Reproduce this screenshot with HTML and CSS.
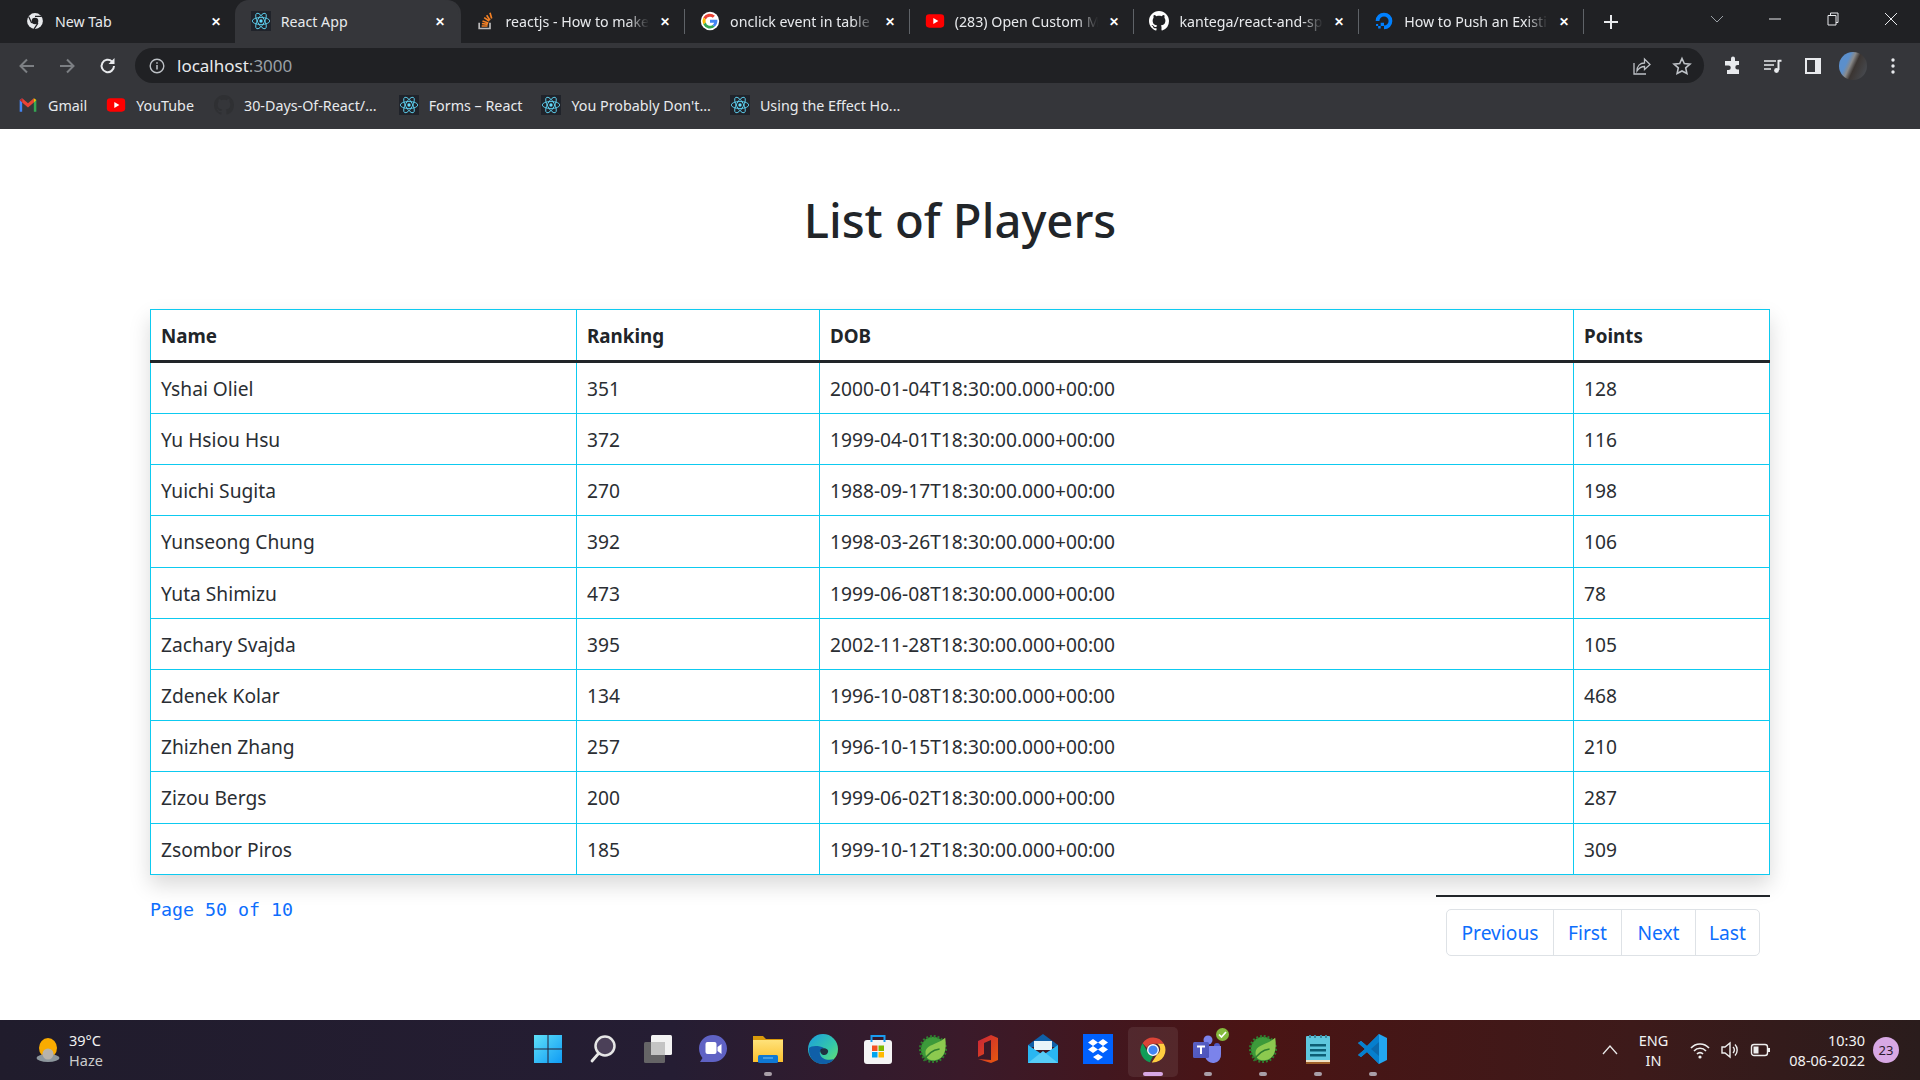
FILE: index.html
```html
<!DOCTYPE html>
<html lang="en">
<head>
<meta charset="utf-8">
<title>React App</title>
<link rel="stylesheet" href="styles.css">
</head>
<body>
<svg class="defs" width="0" height="0" aria-hidden="true">
  <defs>
    <linearGradient id="win" x1="0" y1="0" x2="1" y2="1"><stop offset="0" stop-color="#5fe0f8"/><stop offset="1" stop-color="#0f9bf5"/></linearGradient>
    <linearGradient id="folder" x1="0" y1="0" x2="0" y2="1"><stop offset="0" stop-color="#ffe27a"/><stop offset="1" stop-color="#fbc02d"/></linearGradient>
    <linearGradient id="edge" x1="0" y1="0" x2="1" y2="1"><stop offset="0" stop-color="#1a9be0"/><stop offset=".6" stop-color="#35c9a8"/><stop offset="1" stop-color="#6fe06a"/></linearGradient>
    <linearGradient id="office" x1="0" y1="0" x2="1" y2="1"><stop offset="0" stop-color="#c8233a"/><stop offset="1" stop-color="#e8590c"/></linearGradient>
    <linearGradient id="teamsg" x1="0" y1="0" x2="1" y2="1"><stop offset="0" stop-color="#5a62c4"/><stop offset="1" stop-color="#4b53bc"/></linearGradient>
    <symbol id="react" viewBox="0 0 24 24">
      <rect width="24" height="24" fill="#20232a"/>
      <circle cx="12" cy="12" r="2" fill="#61dafb"/>
      <g fill="none" stroke="#61dafb" stroke-width="1">
        <ellipse cx="12" cy="12" rx="10.5" ry="4.2"/>
        <ellipse cx="12" cy="12" rx="10.5" ry="4.2" transform="rotate(60 12 12)"/>
        <ellipse cx="12" cy="12" rx="10.5" ry="4.2" transform="rotate(120 12 12)"/>
      </g>
    </symbol>
    <symbol id="yt" viewBox="0 0 24 24">
      <rect x="1" y="4" width="22" height="16" rx="4" fill="#f00"/>
      <path d="M10 8.5v7l6-3.5z" fill="#fff"/>
    </symbol>
    <symbol id="gh" viewBox="0 0 16 16">
      <path fill="currentColor" d="M8 0C3.58 0 0 3.58 0 8c0 3.54 2.29 6.53 5.47 7.59.4.07.55-.17.55-.38 0-.19-.01-.82-.01-1.49-2.01.37-2.53-.49-2.69-.94-.09-.23-.48-.94-.82-1.13-.28-.15-.68-.52-.01-.53.63-.01 1.08.58 1.23.82.72 1.21 1.87.87 2.33.66.07-.52.28-.87.51-1.07-1.78-.2-3.64-.89-3.64-3.95 0-.87.31-1.59.82-2.15-.08-.2-.36-1.02.08-2.12 0 0 .67-.21 2.2.82.64-.18 1.32-.27 2-.27s1.36.09 2 .27c1.53-1.04 2.2-.82 2.2-.82.44 1.1.16 1.92.08 2.12.51.56.82 1.27.82 2.15 0 3.07-1.87 3.75-3.65 3.95.29.25.54.73.54 1.48 0 1.07-.01 1.93-.01 2.2 0 .21.15.46.55.38A8.01 8.01 0 0 0 16 8c0-4.42-3.58-8-8-8z"/>
    </symbol>
    <symbol id="chrome" viewBox="0 0 48 48">
      <path fill="#db4437" d="M24 4a20 20 0 0 1 17.3 10H24a10 10 0 0 0-9.5 6.8L7.3 13A20 20 0 0 1 24 4z"/>
      <path fill="#0f9d58" d="M24 44A20 20 0 0 1 7.300 13l8.700 15a10 10 0 0 0 8 6l-5 9.500A20 20 0 0 1 24 44z"/>
      <path fill="#ffcd40" d="M41.300 14A20 20 0 0 1 24 44h-2l8.500-13A10 10 0 0 0 31 14z"/>
      <circle cx="24" cy="24" r="8.500" fill="#4285f4" stroke="#fff" stroke-width="2.200"/>
    </symbol>
    <symbol id="leaf" viewBox="0 0 32 32">
      <circle cx="16" cy="16" r="13" fill="#3c9a3a"/>
      <circle cx="16" cy="16" r="13.500" fill="none" stroke="#2f7d2f" stroke-width="3" stroke-dasharray="2 2"/>
      <path fill="#8cc94f" d="M29 4c2 13-1 24-13 24-5 0-8-3-8-8C8 11 20 12 29 4z"/>
      <path fill="none" stroke="#2f7d2f" stroke-width="1.500" d="M6 29c4-8 10-12 17-13"/>
    </symbol>
  </defs>
</svg>

<header class="browser">
  <div class="tabstrip">
    <div class="tab tab-first">
      <svg class="fav" viewBox="0 0 24 24"><circle cx="12" cy="12" r="9.500" fill="#e8eaed"/><circle cx="12" cy="12" r="4" fill="#202124"/><path d="M12 6.500h8M8 14.500 4.500 7M15.500 14.500 11 21.500" stroke="#202124" stroke-width="1.500" fill="none"/></svg>
      <span class="tab-title">New Tab</span><span class="tab-x">✕</span>
    </div>
    <div class="tab tab-active">
      <svg class="fav"><use href="#react"/></svg>
      <span class="tab-title">React App</span><span class="tab-x">✕</span>
    </div>
    <div class="tab">
      <svg class="fav" viewBox="0 0 24 24"><path d="M5 14v7h13v-7" fill="none" stroke="#bcbbbb" stroke-width="2"/><path d="M8 18h7M8.300 15l7 1M9 12l7 2.500M11 8l6 4M14 5l4 6M18 2l2 7" stroke="#f48024" stroke-width="2" fill="none"/></svg>
      <span class="tab-title fade">reactjs - How to make</span><span class="tab-x">✕</span>
    </div>
    <div class="tab tab-sep">
      <svg class="fav" viewBox="0 0 24 24"><circle cx="12" cy="12" r="11" fill="#fff"/><path d="M12 7a5 5 0 0 1 3.300 1.200l2.600-2.600A9 9 0 0 0 4 7.800l3 2.400A5 5 0 0 1 12 7z" fill="#ea4335"/><path d="M7 10.200 4 7.800a9 9 0 0 0 0 8.400l3-2.400a5 5 0 0 1 0-3.600z" fill="#fbbc05"/><path d="M7 13.800l-3 2.400a9 9 0 0 0 13.700 2.800l-2.800-2.200A5 5 0 0 1 7 13.800z" fill="#34a853"/><path d="M20.800 10.500H12v3.500h5a4.200 4.200 0 0 1-2.100 2.800l2.800 2.200c2.300-2.100 3.500-5.200 3.100-8.500z" fill="#4285f4"/></svg>
      <span class="tab-title fade">onclick event in table</span><span class="tab-x">✕</span>
    </div>
    <div class="tab tab-sep">
      <svg class="fav"><use href="#yt"/></svg>
      <span class="tab-title fade">(283) Open Custom M</span><span class="tab-x">✕</span>
    </div>
    <div class="tab tab-sep">
      <svg class="fav fav-gh"><use href="#gh"/></svg>
      <span class="tab-title fade">kantega/react-and-sp</span><span class="tab-x">✕</span>
    </div>
    <div class="tab tab-sep">
      <svg class="fav" viewBox="0 0 24 24"><path d="M12 22v-4.500a5.500 5.500 0 1 0-5.500-5.500H2A10 10 0 1 1 12 22z" fill="#0080ff"/><path d="M8 18h4v-4H8zM5 21h3v-3H5zM2.500 18H5v-2.500H2.500z" fill="#0080ff"/></svg>
      <span class="tab-title fade">How to Push an Existi</span><span class="tab-x">✕</span>
    </div>
    <div class="tab-new">
      <svg width="16" height="16" viewBox="0 0 16 16"><path d="M8 1v14M1 8h14" stroke="#e8eaed" stroke-width="2"/></svg>
    </div>
    <div class="win-controls">
      <svg width="14" height="14" viewBox="0 0 14 14"><path d="M1 4l6 6 6-6" fill="none" stroke="#9aa0a6"/></svg>
      <svg class="wc-min" width="14" height="14" viewBox="0 0 14 14"><path d="M1 7h12" stroke="#e8eaed"/></svg>
      <svg class="wc-max" width="14" height="14" viewBox="0 0 14 14"><path d="M2 3.500h8v9.500H2zM4.500 3.500V1H12v9.500h-2" fill="none" stroke="#e8eaed"/></svg>
      <svg class="wc-close" width="14" height="14" viewBox="0 0 14 14"><path d="M1 1l12 12M13 1 1 13" stroke="#e8eaed"/></svg>
    </div>
  </div>

  <div class="toolbar">
    <svg class="tb-icon tb-back" viewBox="0 0 20 20"><path d="M17 10H4M10 3.500 3.500 10l6.500 6.500" fill="none" stroke="#7c7f83" stroke-width="2"/></svg>
    <svg class="tb-icon tb-fwd" viewBox="0 0 20 20"><path d="M3 10h13M10 3.500l6.500 6.500-6.500 6.500" fill="none" stroke="#7c7f83" stroke-width="2"/></svg>
    <svg class="tb-icon tb-reload" viewBox="0 0 20 20"><path d="M16 10a6.200 6.200 0 1 1-2-4.600" fill="none" stroke="#e8eaed" stroke-width="2"/><path d="M16.500 2v6h-6z" fill="#e8eaed"/></svg>
    <div class="omnibox">
      <svg class="omni-info" width="16" height="16" viewBox="0 0 16 16"><circle cx="8" cy="8" r="6.800" fill="none" stroke="#bdc1c6" stroke-width="1.400"/><path d="M8 7v4.500M8 4.200v1.500" stroke="#bdc1c6" stroke-width="1.500"/></svg>
      <span class="url">localhost<span class="url-port">:3000</span></span>
      <svg class="omni-share" width="20" height="20" viewBox="0 0 20 20"><path d="M3 7v11h12" fill="none" stroke="#bdc1c6" stroke-width="1.300"/><path d="M6 15c0-5 3-8 7.500-8V3l5.500 5.500-5.500 5V10.500C10 10.500 8 12 6 15z" fill="none" stroke="#bdc1c6" stroke-width="1.300"/></svg>
      <svg class="omni-star" width="20" height="20" viewBox="0 0 20 20"><path d="M10 2.500l2.300 5 5.700.6-4.300 3.800 1.200 5.600L10 15l-4.900 2.500 1.200-5.600L2 8.100l5.700-.6z" fill="none" stroke="#bdc1c6" stroke-width="1.600"/></svg>
    </div>
    <svg class="tb-icon tb-ext" viewBox="0 0 20 20"><path fill="#e8eaed" d="M8 2.500a2 2 0 0 1 4 0V5h4v4h-1.500a2.200 2.200 0 0 0 0 4.400H16V18H4v-4h1.500a2.200 2.200 0 0 0 0-4.500H2V5h6z"/></svg>
    <svg class="tb-icon tb-media" viewBox="0 0 20 20"><path d="M1 5h12M1 9h10M1 13h7" stroke="#e8eaed" stroke-width="1.600"/><path d="M15.500 4v10M15.500 4.800h3" stroke="#e8eaed" stroke-width="2"/><circle cx="13.500" cy="14.500" r="2.400" fill="#e8eaed"/></svg>
    <svg class="tb-icon tb-side" viewBox="0 0 20 20"><path d="M2 2h16v16H2z" fill="#e8eaed"/><rect x="4" y="4" width="8" height="12" fill="#35363a"/></svg>
    <div class="avatar"></div>
    <svg class="tb-icon tb-menu" viewBox="0 0 20 20"><circle cx="10" cy="4" r="1.700" fill="#e8eaed"/><circle cx="10" cy="10" r="1.700" fill="#e8eaed"/><circle cx="10" cy="16" r="1.700" fill="#e8eaed"/></svg>
  </div>

  <nav class="bookmarks">
    <a class="bm bm-gmail"><svg class="bm-ico" viewBox="0 0 24 24"><path d="M2 20V6l3-2v16z" fill="#4285f4"/><path d="M22 20V6l-3-2v16z" fill="#34a853"/><path d="M5 4l7 6 7-6v5l-7 6-7-6z" fill="#ea4335"/><path d="M2 6l3-2v5z" fill="#c5221f"/><path d="M22 6l-3-2v5z" fill="#fbbc04"/></svg>Gmail</a>
    <a class="bm bm-yt"><svg class="bm-ico"><use href="#yt"/></svg>YouTube</a>
    <a class="bm bm-gh"><svg class="bm-ico bm-ghico"><use href="#gh"/></svg>30-Days-Of-React/...</a>
    <a class="bm bm-r1"><svg class="bm-ico"><use href="#react"/></svg>Forms – React</a>
    <a class="bm bm-r2"><svg class="bm-ico"><use href="#react"/></svg>You Probably Don't...</a>
    <a class="bm bm-r3"><svg class="bm-ico"><use href="#react"/></svg>Using the Effect Ho...</a>
  </nav>
</header>

<main class="page">
  <h1 class="title">List of Players</h1>
  <table class="players">
    <colgroup><col class="c-name"><col class="c-rank"><col class="c-dob"><col class="c-pts"></colgroup>
    <thead><tr><th>Name</th><th>Ranking</th><th>DOB</th><th>Points</th></tr></thead>
    <tbody>
      <tr><td>Yshai Oliel</td><td>351</td><td>2000-01-04T18:30:00.000+00:00</td><td>128</td></tr>
      <tr><td>Yu Hsiou Hsu</td><td>372</td><td>1999-04-01T18:30:00.000+00:00</td><td>116</td></tr>
      <tr><td>Yuichi Sugita</td><td>270</td><td>1988-09-17T18:30:00.000+00:00</td><td>198</td></tr>
      <tr><td>Yunseong Chung</td><td>392</td><td>1998-03-26T18:30:00.000+00:00</td><td>106</td></tr>
      <tr><td>Yuta Shimizu</td><td>473</td><td>1999-06-08T18:30:00.000+00:00</td><td>78</td></tr>
      <tr><td>Zachary Svajda</td><td>395</td><td>2002-11-28T18:30:00.000+00:00</td><td>105</td></tr>
      <tr><td>Zdenek Kolar</td><td>134</td><td>1996-10-08T18:30:00.000+00:00</td><td>468</td></tr>
      <tr><td>Zhizhen Zhang</td><td>257</td><td>1996-10-15T18:30:00.000+00:00</td><td>210</td></tr>
      <tr><td>Zizou Bergs</td><td>200</td><td>1999-06-02T18:30:00.000+00:00</td><td>287</td></tr>
      <tr><td>Zsombor Piros</td><td>185</td><td>1999-10-12T18:30:00.000+00:00</td><td>309</td></tr>
    </tbody>
  </table>
  <div class="under">
    <code class="pageinfo">Page 50 of 10</code>
    <div class="pager-wrap">
      <hr class="rule">
      <ul class="pager">
        <li class="p-prev">Previous</li><li class="p-first">First</li><li class="p-next">Next</li><li class="p-last">Last</li>
      </ul>
    </div>
  </div>
</main>

<footer class="taskbar">
  <div class="tb-left">
    <svg class="weather" viewBox="0 0 24 24"><ellipse cx="12" cy="10" rx="9" ry="10" fill="#f9ab00"/><ellipse cx="12" cy="20" rx="11.500" ry="4" fill="#8d979d"/><circle cx="12" cy="16" r="5.500" fill="#b8b3ab"/></svg>
    <div class="weather-text"><span>39°C</span><span class="dim">Haze</span></div>
  </div>
  <div class="tb-apps">
    <div class="app"><svg class="ico" viewBox="0 0 30 30"><path fill="url(#win)" d="M1 1h13.500v13.500H1zM15.500 1H29v13.500H15.500zM1 15.500h13.500V29H1zM15.500 15.500H29V29H15.500z"/></svg></div>
    <div class="app"><svg class="ico" viewBox="0 0 30 30"><circle cx="17" cy="12" r="9.500" fill="#4b4058" stroke="#e6e6e6" stroke-width="2.500"/><path d="M10.500 19.500 4 27" stroke="#e6e6e6" stroke-width="2.800" stroke-linecap="round"/></svg></div>
    <div class="app"><svg class="ico" viewBox="0 0 30 30"><rect x="8" y="1" width="21" height="20" rx="1.500" fill="#f2f2f2"/><rect x="1" y="8" width="21" height="21" rx="1.500" fill="#6a6a6a" opacity=".92"/><rect x="8" y="8" width="14" height="13" fill="#c4c4c4"/></svg></div>
    <div class="app"><svg class="ico" viewBox="0 0 30 30"><path fill="#5f62c4" d="M15 1c8 0 14 6 14 13.500S23 28 15 28H2l2.500-4C2.500 21.500 1 18.500 1 14.500 1 7 7 1 15 1z"/><rect x="7.500" y="8" width="11" height="12" rx="2" fill="#fff"/><path d="M19.500 13l4-3v10l-4-3z" fill="#fff"/></svg></div>
    <div class="app app-on"><svg class="ico" viewBox="0 0 30 30"><path fill="#d99a0b" d="M0 2h10l3 3h17v6H0z"/><path fill="url(#folder)" d="M0 6h30v22H0z"/><rect x="5" y="21" width="20" height="8" rx="1.500" fill="#0f78d4"/><path d="M10 24h10" stroke="#7cc4f5"/></svg></div>
    <div class="app"><svg class="ico" viewBox="0 0 30 30"><circle cx="15" cy="15" r="15" fill="url(#edge)"/><path fill="#0f5fa8" d="M1 14C0 24 7 30 15 30c5 0 9-2 11-5-6 2-13 0-14-5-1-3 2-5 4-6-6-3-13-2-15 0z"/><path fill="#1d2035" d="M13 15c3-2 8 0 7 3s-3 3-5 3c-2-1-4-4-2-6z" opacity=".9"/></svg></div>
    <div class="app"><svg class="ico" viewBox="0 0 30 30"><rect x="1" y="6" width="28" height="24" rx="3" fill="#f4f4f4"/><path d="M8.500 8V2h13v6" fill="none" stroke="#1a9cf0" stroke-width="2"/><path fill="#f25022" d="M9 11.500h5.500V17H9z"/><path fill="#7fba00" d="M15.500 11.500H21V17h-5.500z"/><path fill="#00a4ef" d="M9 18h5.500v5.500H9z"/><path fill="#ffb900" d="M15.500 18H21v5.500h-5.500z"/></svg></div>
    <div class="app"><svg class="ico"><use href="#leaf"/></svg></div>
    <div class="app"><svg class="ico" viewBox="0 0 30 30"><path fill="url(#office)" d="M5 7 18 1l7 3v22l-7 3-13-4 13 1V6l-7 3v11l-6 3z"/></svg></div>
    <div class="app"><svg class="ico" viewBox="0 0 30 30"><path fill="#0f5fa8" d="M15 0 30 11v2H0v-2z"/><path fill="#e8f4fa" d="M6 7h18v9H6z"/><path fill="#29b6f2" d="M0 11l15 10 15-10v18H0z"/><path fill="#56cdf7" d="M0 29 15 17l15 12z"/></svg></div>
    <div class="app"><svg class="ico" viewBox="0 0 30 30"><rect width="30" height="30" fill="#0061fe"/><path fill="#fff" d="M10 5l5 3.500-5 3.500-5-3.500zM20 5l5 3.500-5 3.500-5-3.500zM10 12l5 3.500-5 3.500-5-3.500zM20 12l5 3.500-5 3.500-5-3.500zM15 20l5 3-5 3.500-5-3.500z"/></svg></div>
    <div class="app app-active"><svg class="ico"><use href="#chrome"/></svg></div>
    <div class="app app-on"><svg class="ico" viewBox="0 0 30 30"><circle cx="15" cy="6" r="4.500" fill="#7b83eb"/><circle cx="24" cy="12" r="3" fill="#5059c9"/><path d="M12 12h16v8a8 8 0 0 1-16 2z" fill="#7b83eb"/><rect x="0" y="8" width="16" height="16" rx="1.500" fill="url(#teamsg)"/><path d="M4 12.500h8M8 12.500V20" stroke="#fff" stroke-width="2"/></svg><span class="teams-badge"><svg width="13" height="13" viewBox="0 0 13 13"><path d="M3 6.500l2.500 2.500L10 4" fill="none" stroke="#fff" stroke-width="1.700"/></svg></span></div>
    <div class="app app-on"><svg class="ico"><use href="#leaf"/></svg></div>
    <div class="app app-on"><svg class="ico" viewBox="0 0 30 30"><rect x="3" y="2" width="24" height="28" rx="1" fill="#5ec7de"/><path d="M7 10h16v2.500H7zM7 15h16v2.500H7zM7 20h16v2.500H7z" fill="#0d5e75"/><rect x="3" y="26" width="24" height="2" fill="#f1e3c6"/><rect x="3" y="28" width="24" height="2" fill="#a0622a"/><path d="M7 1v3M12 1v3M18 1v3M23 1v3" stroke="#3a8aa0" stroke-width="2"/></svg></div>
    <div class="app app-on"><svg class="ico" viewBox="0 0 30 30"><path fill="#23a6f0" d="M21 0 29 4v22l-8 4-12-12-6 5-3-2 7-6-7-6 3-2 6 5zM21 8l-8 7 8 7z"/><path fill="#0078c8" d="M21 0 9 12l-6-5-3 2 7 6-7 6 3 2 6-5 12 12z" opacity=".85"/></svg></div>
  </div>
  <div class="tb-right">
    <svg class="tray-chev" width="16" height="16" viewBox="0 0 16 16"><path d="M1 12l7-8 7 8" fill="none" stroke="#e8e8e8" stroke-width="1.300"/></svg>
    <div class="lang"><span>ENG</span><span>IN</span></div>
    <svg class="tray" width="20" height="20" viewBox="0 0 20 20"><path d="M1 8a12 12 0 0 1 18 0M4 11a8 8 0 0 1 12 0M7 14a4 4 0 0 1 6 0" fill="none" stroke="#eee" stroke-width="1.600"/><circle cx="10" cy="17" r="1.600" fill="#eee"/></svg>
    <svg class="tray" width="20" height="20" viewBox="0 0 20 20"><path d="M2 7h3l5-4v14l-5-4H2z" fill="none" stroke="#eee" stroke-width="1.400"/><path d="M13 7a4 4 0 0 1 0 6M15 4.500a8 8 0 0 1 0 11" fill="none" stroke="#eee" stroke-width="1.400"/></svg>
    <svg class="tray tray-batt" width="22" height="20" viewBox="0 0 22 20"><rect x="1.500" y="4.500" width="16" height="11" rx="2.500" fill="none" stroke="#eee" stroke-width="1.400"/><rect x="3.500" y="6.500" width="5" height="7" fill="#eee"/><path d="M19 8v4" stroke="#eee" stroke-width="2"/></svg>
    <div class="clock"><span>10:30</span><span>08-06-2022</span></div>
    <div class="notif">23</div>
  </div>
</footer>
</body>
</html>
```
FILE: styles.css
```css
* { box-sizing: border-box; }
html, body { margin: 0; padding: 0; }
body {
  width: 1920px;
  height: 1080px;
  overflow: hidden;
  display: flex;
  flex-direction: column;
  background: #fff;
  font-family: "Noto Sans", "Open Sans", sans-serif;
  color: #212529;
}
.defs { position: absolute; }

/* browser chrome */
.browser { height: 129px; background: #35363a; color: #e8eaed; flex: none; }
.tabstrip {
  height: 43px;
  background: #202124;
  display: flex;
  padding-left: 10px;
  position: relative;
}
.tab {
  width: 224.7px;
  height: 43px;
  display: flex;
  align-items: center;
  padding: 0 0 1px 16px;
  font-size: 14.2px;
  position: relative;
  flex: none;
}
.tab-first { padding-left: 15px; }
.tab-active {
  background: #35363a;
  border-radius: 14px 14px 0 0;
  box-shadow: 2px 0 0 #35363a;
}
.tab-sep::before {
  content: "";
  position: absolute;
  left: 0;
  top: 9px;
  height: 25px;
  width: 1px;
  background: #5f6368;
}
.fav { width: 20px; height: 20px; flex: none; margin-right: 10px; }
.fav-gh { color: #fff; }
.tab-title {
  flex: 1;
  white-space: nowrap;
  overflow: hidden;
  width: 0;
}
.fade {
  -webkit-mask-image: linear-gradient(to right, #000 85%, transparent);
  mask-image: linear-gradient(to right, #000 85%, transparent);
}
.tab-x { width: 12px; margin: 0 13px 0 10px; font-size: 12px; text-align: center; flex: none; font-weight: 700; color: #fff; }
.tab-new {
  width: 56px;
  height: 25px;
  margin-top: 9px;
  display: flex;
  align-items: center;
  justify-content: center;
  border-left: 1px solid #5f6368;
}
.win-controls {
  position: absolute;
  right: 22px;
  top: 12px;
  display: flex;
  gap: 44px;
}

.toolbar {
  height: 45px;
  display: flex;
  align-items: center;
  padding-left: 17px;
}
.tb-icon { width: 20px; height: 20px; flex: none; }
.tb-fwd { margin-left: 20px; }
.tb-reload { margin-left: 21px; }
.omnibox {
  width: 1569px;
  height: 35px;
  margin-left: 17px;
  border-radius: 18px;
  background: #202124;
  display: flex;
  align-items: center;
  padding: 0 12px 0 14px;
  font-size: 17px;
  flex: none;
}
.omni-info { margin-right: 12px; flex: none; }
.url { flex: 1; color: #e8eaed; }
.url-port { color: #9aa0a6; }
.omni-share { margin-right: 21px; }
.tb-ext { margin-left: 19px; }
.tb-media { margin-left: 20px; }
.tb-side { margin-left: 20px; }
.avatar {
  width: 28px;
  height: 28px;
  margin-left: 16px;
  border-radius: 50%;
  background: linear-gradient(115deg, #5b8fcc 0 30%, #8a8a8a 42%, #3b3532 55%, #4a5058 100%);
  flex: none;
}
.tb-menu { margin-left: 16px; }

.bookmarks {
  height: 41px;
  display: flex;
  align-items: center;
  font-size: 14.3px;
  padding-left: 18px;
  padding-bottom: 7px;
}
.bm { display: flex; align-items: center; color: #e8eaed; white-space: nowrap; }
.bm-ico { width: 20px; height: 20px; margin-right: 10px; flex: none; }
.bm-ghico { color: #2f3033; }
.bm-yt { margin-left: 19px; }
.bm-gh { margin-left: 20px; }
.bm-r1 { margin-left: 22px; }
.bm-r2 { margin-left: 19px; }
.bm-r3 { margin-left: 19px; }

/* page */
.page {
  flex: 1;
  min-height: 0;
  padding: 0 150px;
  display: flex;
  flex-direction: column;
}
.title {
  margin: 0;
  padding-top: 56px;
  height: 180px;
  text-align: center;
  font-size: 47.2px;
  line-height: 70px;
  font-weight: 500;
  color: #212529;
}
.players {
  width: 1619px;
  border-collapse: collapse;
  table-layout: fixed;
  font-size: 19.2px;
  color: #2a2e33;
  box-shadow: 0 10px 20px rgba(0, 0, 0, .15);
}
.c-name { width: 426px; }
.c-rank { width: 243px; }
.c-dob { width: 754px; }
.c-pts { width: 196px; }
.players th, .players td {
  border: 1px solid #0dcaf0;
  padding: 11px 10px 9px 10px;
  line-height: 30px;
  height: 51.2px;
  text-align: left;
}
.players th {
  font-weight: 700;
  height: 52px;
  font-size: 18.8px;
  color: #212529;
}
.players thead th { border-bottom: 3px solid #212529; }

.under {
  display: flex;
  justify-content: space-between;
  align-items: flex-start;
  margin-top: 20px;
}
.pageinfo {
  font-family: "DejaVu Sans Mono", "Liberation Mono", monospace;
  font-size: 18.3px;
  color: #0d6efd;
  line-height: 29px;
}
.pager-wrap { width: 334px; }
.rule { margin: 0 0 12px; border: 0; height: 2px; background: #212529; }
.pager {
  margin: 0 10px;
  padding: 0;
  list-style: none;
  display: flex;
  height: 47px;
  border: 1px solid #dee2e6;
  border-radius: 5px;
  font-size: 19.2px;
  color: #0d6efd;
  background: #fff;
}
.pager li {
  line-height: 45px;
  text-align: center;
  border-left: 1px solid #dee2e6;
}
.pager .p-prev { width: 106px; border-left: 0; }
.pager .p-first { width: 68px; }
.pager .p-next { width: 74px; }
.pager .p-last { width: 64px; }

/* taskbar */
.taskbar {
  height: 60px;
  flex: none;
  display: grid;
  grid-template-columns: 1fr auto 1fr;
  align-items: center;
  color: #f2f2f2;
  font-size: 14.5px;
  background: linear-gradient(90deg, #201c2c 0, #251d33 35%, #3a1a2a 50%, #4a1414 65%, #3d1a1a 85%, #2a1c1c 100%);
}
.tb-left { display: flex; align-items: center; padding-left: 36px; }
.weather { width: 24px; height: 24px; margin-right: 9px; }
.weather-text, .lang, .clock { display: flex; flex-direction: column; line-height: 20px; }
.dim { color: #ccc; }
.tb-apps { display: flex; padding-top: 3px; }
.app {
  width: 55px;
  height: 54px;
  display: flex;
  align-items: center;
  justify-content: center;
  position: relative;
  padding-bottom: 6px;
}
.ico { width: 30px; height: 30px; }
.app-on::after, .app-active::after {
  content: "";
  position: absolute;
  bottom: 3px;
  left: 23.5px;
  width: 8px;
  height: 4px;
  border-radius: 2px;
  background: #a99fa8;
}
.app-active {
  background: rgba(255, 255, 255, .08);
  border-radius: 5px;
  width: 50px;
  height: 50px;
  margin: 2px 2.5px 0;
  padding-bottom: 3px;
  align-self: flex-start;
}
.app-active::after { left: 15px; width: 20px; bottom: 1px; background: #d8a8e4; }
.teams-badge {
  position: absolute;
  right: 6px;
  top: 3px;
  width: 13px;
  height: 13px;
  border-radius: 50%;
  background: #84b93c;
  display: flex;
}
.tb-right { display: flex; align-items: center; justify-content: flex-end; padding-right: 21px; }
.tray-chev { margin-right: 21px; }
.lang { text-align: center; margin-right: 22px; }
.tray { margin-right: 10px; }
.tray-batt { margin-right: 9px; }
.clock { text-align: right; margin: 0 8px; }
.notif {
  width: 26px;
  height: 26px;
  border-radius: 50%;
  background: #d8a8e4;
  color: #2b1a2b;
  font-size: 13px;
  line-height: 26px;
  text-align: center;
}
```
